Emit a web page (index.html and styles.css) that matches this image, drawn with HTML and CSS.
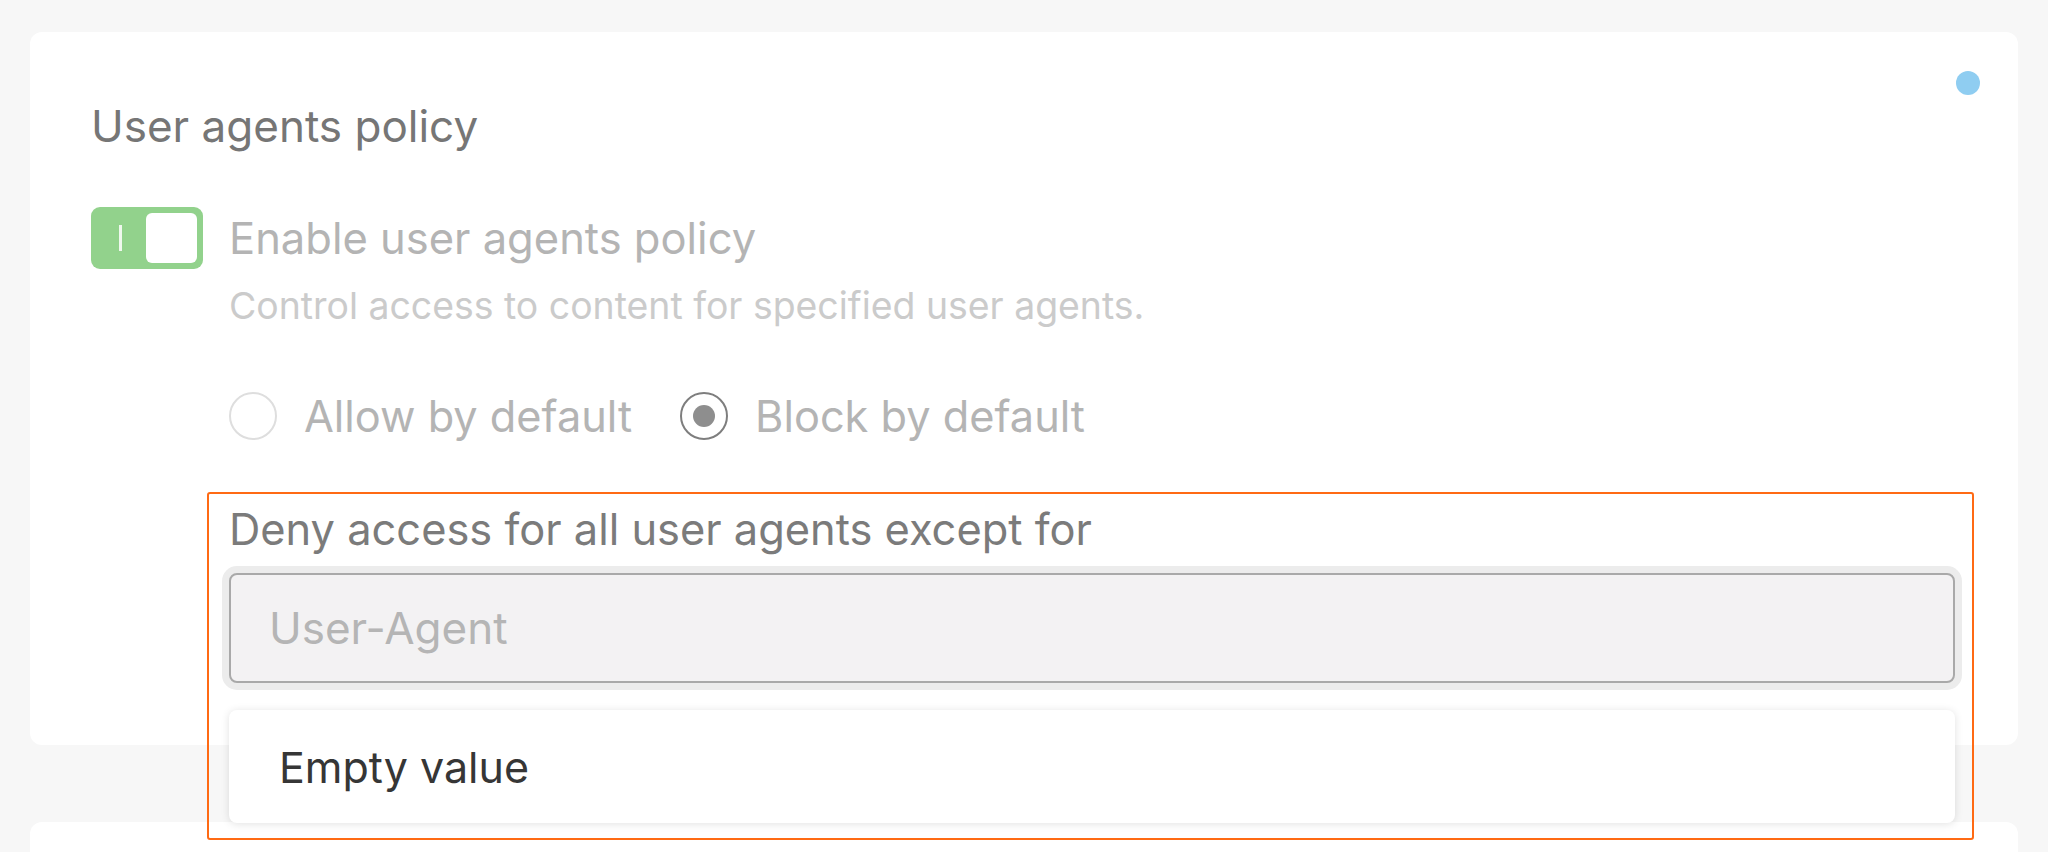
FILE: index.html
```html
<!DOCTYPE html>
<html lang="en">
<head>
<meta charset="utf-8">
<title>User agents policy</title>
<link rel="stylesheet" href="styles.css">
</head>
<body>
<div class="page">
  <section class="card">
    <span class="status-dot"></span>
    <h2 class="card-title">User agents policy</h2>
    <div class="setting">
      <div class="toggle"><span class="toggle-mark"></span><span class="toggle-knob"></span></div>
      <div class="setting-body">
        <div class="setting-label">Enable user agents policy</div>
        <div class="setting-desc">Control access to content for specified user agents.</div>
        <div class="radios">
          <div class="radio"><span class="radio-circle"></span><span>Allow by default</span></div>
          <div class="radio radio-checked"><span class="radio-circle"></span><span>Block by default</span></div>
        </div>
        <div class="field">
          <div class="field-label">Deny access for all user agents except for</div>
          <div class="input">User-Agent</div>
          <div class="dropdown"><div class="dropdown-item">Empty value</div></div>
        </div>
      </div>
    </div>
  </section>
  <section class="card card-next"></section>
</div>
</body>
</html>
```
FILE: styles.css
```css
* { box-sizing: border-box; }
html, body { margin: 0; padding: 0; }
body {
  background: #f7f7f7;
  font-family: Inter, "Noto Sans", sans-serif;
  overflow: hidden;
  height: 852px;
}
.page {
  padding: 32px 30px 0;
}
.card {
  position: relative;
  background: #ffffff;
  border-radius: 12px;
  padding: 68px 63px 62px 61px;
}
.card-next {
  margin-top: 77px;
  height: 120px;
  padding: 0;
}
.status-dot {
  position: absolute;
  top: 39px;
  right: 38px;
  width: 24px;
  height: 24px;
  border-radius: 50%;
  background: #8fcdf1;
}
.card-title {
  margin: 0;
  font-size: 44px;
  line-height: 52px;
  font-weight: 400;
  color: #767676;
}
.setting {
  display: flex;
  align-items: flex-start;
  gap: 26px;
  margin-top: 55px;
}
.toggle {
  flex: none;
  display: flex;
  align-items: center;
  width: 112px;
  height: 62px;
  border-radius: 9px;
  background: #92d28c;
  padding: 0 6px 0 28px;
}
.toggle-mark {
  width: 3px;
  height: 26px;
  background: rgba(255,255,255,0.85);
}
.toggle-knob {
  margin-left: auto;
  width: 51px;
  height: 50px;
  border-radius: 6px;
  background: #ffffff;
}
.setting-body {
  flex: 1;
  padding-top: 5px;
}
.setting-label {
  font-size: 43.5px;
  line-height: 52px;
  color: #b4b4b4;
}
.setting-desc {
  margin-top: 20px;
  font-size: 37.4px;
  line-height: 44px;
  color: #cbcbcb;
}
.radios {
  display: flex;
  align-items: center;
  gap: 48px;
  margin-top: 62px;
}
.radio {
  display: flex;
  align-items: center;
  gap: 27px;
  font-size: 43.3px;
  line-height: 52px;
  color: #b4b4b4;
}
.radio-circle {
  width: 48px;
  height: 48px;
  border-radius: 50%;
  border: 2px solid #dedede;
  display: flex;
  align-items: center;
  justify-content: center;
}
.radio-checked .radio-circle {
  border-color: #7e7e7e;
}
.radio-checked .radio-circle::before {
  content: "";
  width: 22px;
  height: 22px;
  border-radius: 50%;
  background: #8e8e8e;
}
.field {
  position: relative;
  margin-top: 61px;
}
.field::after {
  content: "";
  position: absolute;
  left: -22px;
  right: -19px;
  top: -11px;
  bottom: -157px;
  border: 2px solid #ff6a14;
  border-radius: 3px;
  pointer-events: none;
  z-index: 3;
}
.field-label {
  font-size: 43.4px;
  line-height: 52px;
  color: #7b7b7b;
}
.input {
  margin-top: 18px;
  height: 110px;
  display: flex;
  align-items: center;
  padding-left: 38px;
  border: 2px solid #a9a9a9;
  border-radius: 8px;
  background: #f3f2f3;
  box-shadow: 0 0 0 7px #ececec;
  font-size: 44px;
  color: #b5b5b5;
}
.dropdown {
  position: absolute;
  left: 0;
  right: 0;
  top: 207px;
  height: 113px;
  background: #ffffff;
  border-radius: 8px;
  box-shadow: 0 1px 8px rgba(0,0,0,0.12);
  display: flex;
  align-items: center;
  z-index: 2;
}
.dropdown-item {
  padding-left: 50px;
  font-size: 43px;
  color: #363636;
}
```
